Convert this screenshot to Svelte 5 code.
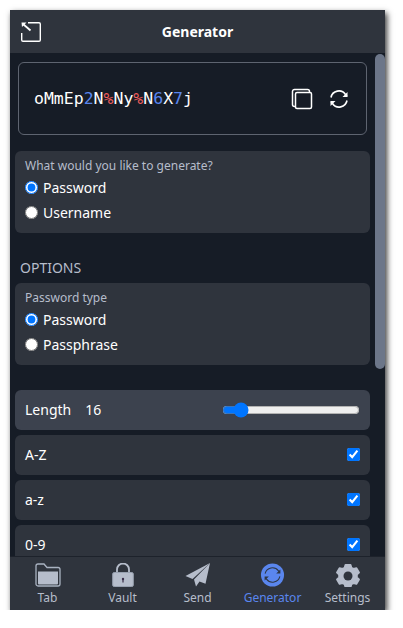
<script>
	let chars = [
		['oMmEp', ''], ['2', 'num'], ['N', ''], ['%', 'sym'], ['Ny', ''], ['%', 'sym'],
		['N', ''], ['6', 'num'], ['X', ''], ['7', 'num'], ['j', '']
	];
	let checks = ['A-Z', 'a-z', '0-9'];
</script>

<div class="popup">
	<header class="top">
		<svg class="popout" width="20" height="20" viewBox="0 0 20 20" fill="none" stroke="#fff" stroke-width="1.400">
			<path d="M7 0.700h11a1.300 1.300 0 0 1 1.300 1.300v16a1.300 1.300 0 0 1-1.300 1.300H2a1.300 1.300 0 0 1-1.300-1.300V11" />
			<path d="M2 2l7.500 6.500" stroke-width="1.800" />
			<path d="M0.500 0.500h5l-4.500 4.500z" fill="#fff" stroke="none" />
		</svg>
		<h1>Generator</h1>
	</header>

	<div class="middle">
		<main class="content">
			<div class="pw-box">
				<div class="pw">
					{#each chars as c}<span class={c[1]}>{c[0]}</span>{/each}
				</div>
				<div class="pw-actions">
					<svg width="22" height="22" viewBox="0 0 22 22" fill="none" stroke="#fff" stroke-width="1.500">
						<rect x="4.500" y="4.500" width="16" height="16" rx="1.500" />
						<path d="M4.500 18.500h-1a2 2 0 0 1-2-2V3.500a2 2 0 0 1 2-2h13a2 2 0 0 1 2 2v1" />
					</svg>
					<svg width="20" height="20" viewBox="0 0 20 20" fill="none" stroke="#fff" stroke-width="1.600">
						<path d="M2 8.500a8 8 0 0 1 14.500-3l1.500 2" />
						<path d="M18 11.500a8 8 0 0 1-14.500 3l-1.500-2" />
						<path d="M18.500 3v5h-5z" fill="#fff" stroke="none" />
						<path d="M1.500 17v-5h5z" fill="#fff" stroke="none" />
					</svg>
				</div>
			</div>

			<section class="card group first">
				<div class="legend">What would you like to generate?</div>
				<label><input type="radio" name="kind" checked /> Password</label>
				<label><input type="radio" name="kind" /> Username</label>
			</section>

			<h2>OPTIONS</h2>

			<section class="card group">
				<div class="legend">Password type</div>
				<label><input type="radio" name="ptype" checked /> Password</label>
				<label><input type="radio" name="ptype" /> Passphrase</label>
			</section>

			<div class="row length">
				<span class="len-label">Length</span>
				<span class="len-value">16</span>
				<input class="slider" type="range" min="5" max="128" value="16" />
			</div>

			{#each checks as c}
				<div class="row">
					<span>{c}</span>
					<input type="checkbox" checked />
				</div>
			{/each}
		</main>
		<div class="rail"><div class="thumb"></div></div>
	</div>

	<nav class="tabs">
		<div class="tab">
			<svg width="26" height="24" viewBox="0 0 26 24">
				<path d="M1 3a2 2 0 0 1 2-2h6l3 3.500h11a2 2 0 0 1 2 2V21a2 2 0 0 1-2 2H3a2 2 0 0 1-2-2z" fill="none" stroke="#a9b2c1" stroke-width="1.300" />
				<path d="M3 8.500h20v12a1 1 0 0 1-1 1H4a1 1 0 0 1-1-1z" fill="#b6bdcb" />
			</svg>
			<span>Tab</span>
		</div>
		<div class="tab">
			<svg width="22" height="24" viewBox="0 0 22 24">
				<path d="M5 10V6.500a6 6 0 0 1 12 0V10" fill="none" stroke="#b6bdcb" stroke-width="1.800" />
				<rect x="0.700" y="9.500" width="20.600" height="14" rx="1.500" fill="#b6bdcb" stroke="#98a1b0" />
				<rect x="10.400" y="16" width="1.200" height="3.500" fill="#3a2f4a" />
				<circle cx="11" cy="16" r="1.200" fill="#3a2f4a" />
			</svg>
			<span>Vault</span>
		</div>
		<div class="tab">
			<svg width="26" height="24" viewBox="0 0 26 24">
				<path d="M25 0L0.500 13l7 3z" fill="#b6bdcb" />
				<path d="M25 0L9 16.500l2 7 3.500-5 6 2.300z" fill="#b6bdcb" />
			</svg>
			<span>Send</span>
		</div>
		<div class="tab active">
			<svg width="25" height="24" viewBox="0 0 26 26">
				<circle cx="13" cy="13" r="12.500" fill="#5a86ee" />
				<g fill="none" stroke="#2d3644" stroke-width="1.100">
					<path d="M5 11.500a8.200 8.200 0 0 1 14.500-3l1 1.500" />
					<path d="M21 14.500a8.200 8.200 0 0 1-14.500 3l-1-1.500" />
				</g>
				<path d="M21.500 7v4.500h-4.500z" fill="#2d3644" />
				<path d="M4.500 19v-4.500h4.500z" fill="#2d3644" />
			</svg>
			<span>Generator</span>
		</div>
		<div class="tab">
			<svg width="24" height="24" viewBox="0 0 24 24">
				<path fill-rule="evenodd" fill="#b6bdcb" stroke="#b6bdcb" stroke-width="2" stroke-linejoin="round" d="M9.500 2h5l.8 2.800 2.200 1.200 2.900-.7 2.500 4.300-2.100 2v2.800l2.100 2-2.500 4.300-2.900-.7-2.200 1.200-.8 2.800h-5l-.8-2.800-2.200-1.200-2.900.7-2.500-4.300 2.100-2v-2.800l-2.100-2 2.500-4.300 2.900.7 2.200-1.200z" />
				<circle cx="12" cy="13" r="4.500" fill="#2f343d" />
			</svg>
			<span>Settings</span>
		</div>
	</nav>
</div>

<style>
	:global(body) {
		background: #fff;
	}
	.popup {
		width: 375px;
		height: 600px;
		margin: 10px 0 0 10px;
		display: flex;
		flex-direction: column;
		background: #161c26;
		color: #fff;
		font-family: "Noto Sans", sans-serif;
		font-size: 14px;
		box-shadow: 2px 3px 6px rgba(0, 0, 0, 0.8);
	}
	.top {
		height: 43px;
		flex: none;
		background: #2f343d;
		display: flex;
		align-items: center;
		justify-content: center;
		position: relative;
	}
	.popout {
		position: absolute;
		left: 11px;
		top: 12px;
	}
	h1 {
		margin: 0;
		font-size: 14px;
		font-weight: 700;
	}
	.middle {
		flex: 1;
		min-height: 0;
		display: flex;
	}
	.content {
		flex: 1;
		min-width: 0;
		overflow: hidden;
		padding: 9px 5px 0;
	}
	.rail {
		width: 10px;
		flex: none;
		padding-top: 1px;
	}
	.thumb {
		height: 315px;
		background: #6c7689;
		border-radius: 5px;
	}
	.pw-box {
		margin: 0 3px;
		height: 73px;
		box-sizing: border-box;
		border: 1px solid #5e6470;
		border-radius: 6px;
		display: flex;
		align-items: center;
		justify-content: space-between;
		padding: 0 17px 0 15px;
	}
	.pw {
		font-family: "DejaVu Sans Mono", monospace;
		font-size: 16.500px;
		color: #fff;
	}
	.num {
		color: #5a86ee;
	}
	.sym {
		color: #f05c5c;
	}
	.pw-actions {
		display: flex;
		align-items: center;
		gap: 16px;
	}
	.card {
		background: #2f343d;
		border-radius: 6px;
	}
	.group {
		height: 82px;
		box-sizing: border-box;
		padding: 6px 10px 0;
	}
	.first {
		margin-top: 16px;
	}
	.legend {
		font-size: 12px;
		line-height: 17px;
		color: #b6bdcb;
		margin-bottom: 1px;
	}
	label {
		display: flex;
		align-items: center;
		height: 25px;
		gap: 5px;
		font-size: 14px;
	}
	label input {
		margin: 0;
		width: 13px;
		height: 13px;
	}
	h2 {
		margin: 26px 0 6px 5px;
		font-size: 14px;
		line-height: 18px;
		font-weight: 400;
		color: #b6bdcb;
	}
	.row {
		height: 40px;
		box-sizing: border-box;
		margin-bottom: 5px;
		padding: 0 10px 1px;
		background: #2f343d;
		border-radius: 6px;
		display: flex;
		align-items: center;
		justify-content: space-between;
	}
	.row input[type="checkbox"] {
		margin: 0;
		width: 13px;
		height: 13px;
	}
	.length {
		margin-top: 25px;
		background: #3c424e;
		justify-content: flex-start;
	}
	.len-value {
		margin-left: 14px;
	}
	.slider {
		margin: 0 0 0 auto;
		width: 138px;
	}
	.tabs {
		height: 54px;
		flex: none;
		box-sizing: border-box;
		background: #2f343d;
		border-top: 1px solid #1d222b;
		display: grid;
		grid-template-columns: repeat(5, 1fr);
	}
	.tab {
		display: flex;
		flex-direction: column;
		align-items: center;
		padding-top: 6px;
		color: #b6bdcb;
		font-size: 12px;
	}
	.tab svg {
		flex: none;
	}
	.tab span {
		line-height: 16px;
		margin-top: 3px;
	}
	.active {
		color: #5a86ee;
	}
</style>
